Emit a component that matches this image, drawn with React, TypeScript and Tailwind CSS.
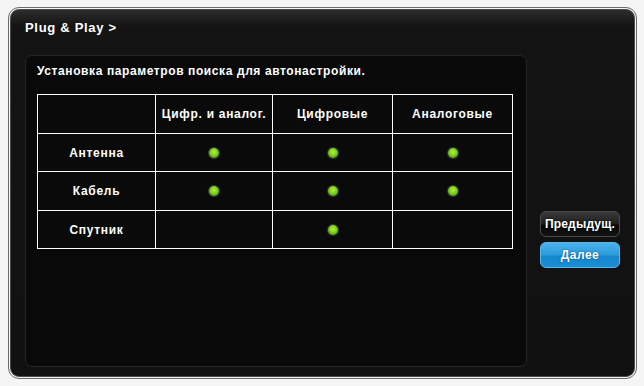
import React from "react";

const Dot = () => (
  <span className="block w-[10px] h-[10px] rounded-full bg-[radial-gradient(circle_at_50%_40%,#b4f03a_0%,#7cd01c_45%,#4f9a0e_85%,#5a6a50_100%)] shadow-[0_0_1px_1px_rgba(120,120,120,0.45)]" />
);

const Cell = ({ children }: { children?: React.ReactNode }) => (
  <div className="bg-[#0a0a0a] flex items-center justify-center text-white font-bold text-[12px] leading-none tracking-[0.7px]">
    {children}
  </div>
);

export default function App() {
  return (
    <div
      className="w-[644px] h-[386px] bg-[#f5f5f5] pt-[7px] pl-[8px]"
      style={{ fontFamily: '"Liberation Sans", Arial, sans-serif' }}
    >
      <div className="w-[629px] h-[372px] rounded-[11px] border border-[#6a6a6a] bg-[#f4f4f4] p-px">
        <div className="h-full rounded-[9px] border border-[#4a4a4a] bg-[linear-gradient(#2c2c2c,#141414_16px,#111111)] flex flex-col">
          <div className="h-[45px] pl-[14px] pt-[10px] text-white font-bold text-[13px] leading-[16px] tracking-[0.7px]">
            Plug &amp; Play &gt;
          </div>
          <div className="flex flex-1">
            <div className="ml-[14px] w-[502px] h-[312px] rounded-[7px] border border-[#262626] bg-[#090909] pl-[11px] pt-[7px]">
              <div className="text-white font-bold text-[12px] leading-[16px] tracking-[0.6px]">
                Установка параметров поиска для автонастройки.
              </div>
              <div className="mt-[15px] w-[476px] grid grid-cols-[117px_116px_119px_119px] grid-rows-[38px_37px_38px_37px] gap-px bg-white p-px">
                <Cell />
                <Cell>Цифр. и аналог.</Cell>
                <Cell>Цифровые</Cell>
                <Cell>Аналоговые</Cell>
                <Cell>Антенна</Cell>
                <Cell><Dot /></Cell>
                <Cell><Dot /></Cell>
                <Cell><Dot /></Cell>
                <Cell>Кабель</Cell>
                <Cell><Dot /></Cell>
                <Cell><Dot /></Cell>
                <Cell><Dot /></Cell>
                <Cell>Спутник</Cell>
                <Cell />
                <Cell><Dot /></Cell>
                <Cell />
              </div>
            </div>
            <div className="ml-[13px] pt-[156px] flex flex-col gap-[5px]">
              <button className="w-[80px] h-[26px] rounded-[6px] border border-[#4c4c4c] bg-[linear-gradient(#3a3a3a,#1e1e1e_50%,#050505_55%,#141414)] text-white font-bold text-[12px] leading-none tracking-[0.2px] [text-shadow:0_0_2px_#000]">
                Предыдущ.
              </button>
              <button className="w-[80px] h-[26px] rounded-[6px] border border-[#5cb8ec] bg-[linear-gradient(#4cb2ea,#2a9ada_50%,#1686cc_55%,#1a8fd4)] text-white font-bold text-[12px] leading-none tracking-[0.5px] [text-shadow:0_0_2px_#0a4a80]">
                Далее
              </button>
            </div>
          </div>
        </div>
      </div>
    </div>
  );
}
